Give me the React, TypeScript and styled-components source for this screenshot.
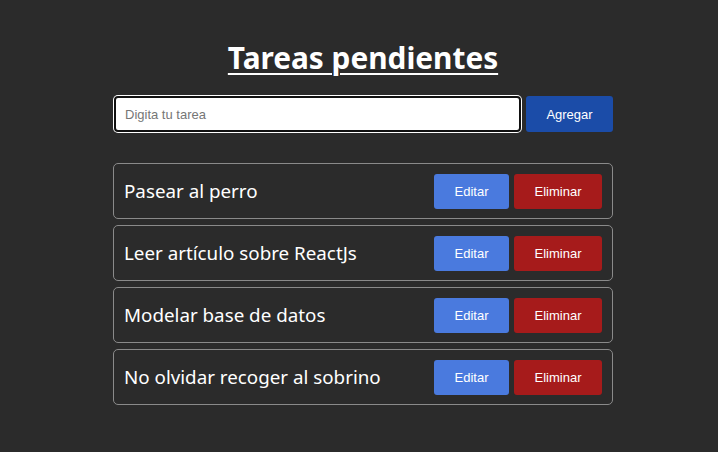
import React from "react";
import styled, { createGlobalStyle } from "styled-components";

const Global = createGlobalStyle`
  html, body { margin: 0; padding: 0; background: #2b2b2b; }
  body { font-family: "Noto Sans", sans-serif; padding-left: 8px; }
`;

const Page = styled.div`
  width: 500px;
  margin: 0 auto;
  padding-top: 34px;
  display: flex;
  flex-direction: column;
`;

const Title = styled.h1`
  margin: 0 0 14px;
  text-align: center;
  color: #fff;
  font-family: "Noto Sans", sans-serif;
  font-size: 29.8px;
  font-weight: 700;
  line-height: 48px;
  text-decoration: underline;
  text-decoration-thickness: 2px;
  text-underline-offset: 4px;
`;

const Form = styled.form`
  display: flex;
  gap: 5px;
  margin-bottom: 31px;
`;

const Input = styled.input`
  flex: 1;
  height: 36px;
  box-sizing: border-box;
  border: 2px solid #111;
  border-radius: 4px;
  box-shadow: 0 0 0 1px #fff;
  margin-left: 1px;
  padding: 0 9px;
  font-family: "Liberation Sans", Arial, sans-serif;
  font-size: 13px;
  outline: none;
  &::placeholder { color: #767676; }
`;

const Button = styled.button<{ $variant: "add" | "edit" | "delete" }>`
  border: none;
  border-radius: 3px;
  color: #fff;
  font-family: "Liberation Sans", Arial, sans-serif;
  font-size: 13px;
  cursor: pointer;
  background: ${(p) =>
    p.$variant === "add" ? "#1b4ca8" : p.$variant === "edit" ? "#4a7ade" : "#a61b1b"};
`;

const AddButton = styled(Button)`
  width: 87px;
  height: 36px;
`;

const List = styled.ul`
  list-style: none;
  margin: 0;
  padding: 0;
  display: flex;
  flex-direction: column;
  gap: 6px;
`;

const Item = styled.li`
  height: 56px;
  box-sizing: border-box;
  border: 1px solid #8a8a8a;
  border-radius: 5px;
  display: flex;
  align-items: center;
  padding: 0 10px 0 10px;
`;

const ItemText = styled.span`
  flex: 1;
  color: #fff;
  font-size: 18.8px;
  font-family: "Noto Sans", sans-serif;
`;

const Actions = styled.div`
  display: flex;
  gap: 5px;
`;

const EditButton = styled(Button)`
  width: 75px;
  height: 35px;
`;

const DeleteButton = styled(Button)`
  width: 88px;
  height: 35px;
`;

const tasks = [
  "Pasear al perro",
  "Leer artículo sobre ReactJs",
  "Modelar base de datos",
  "No olvidar recoger al sobrino",
];

export default function App() {
  return (
    <>
      <Global />
      <Page>
        <Title>Tareas pendientes</Title>
        <Form onSubmit={(e) => e.preventDefault()}>
          <Input placeholder="Digita tu tarea" />
          <AddButton $variant="add" type="submit">Agregar</AddButton>
        </Form>
        <List>
          {tasks.map((t) => (
            <Item key={t}>
              <ItemText>{t}</ItemText>
              <Actions>
                <EditButton $variant="edit">Editar</EditButton>
                <DeleteButton $variant="delete">Eliminar</DeleteButton>
              </Actions>
            </Item>
          ))}
        </List>
      </Page>
    </>
  );
}
